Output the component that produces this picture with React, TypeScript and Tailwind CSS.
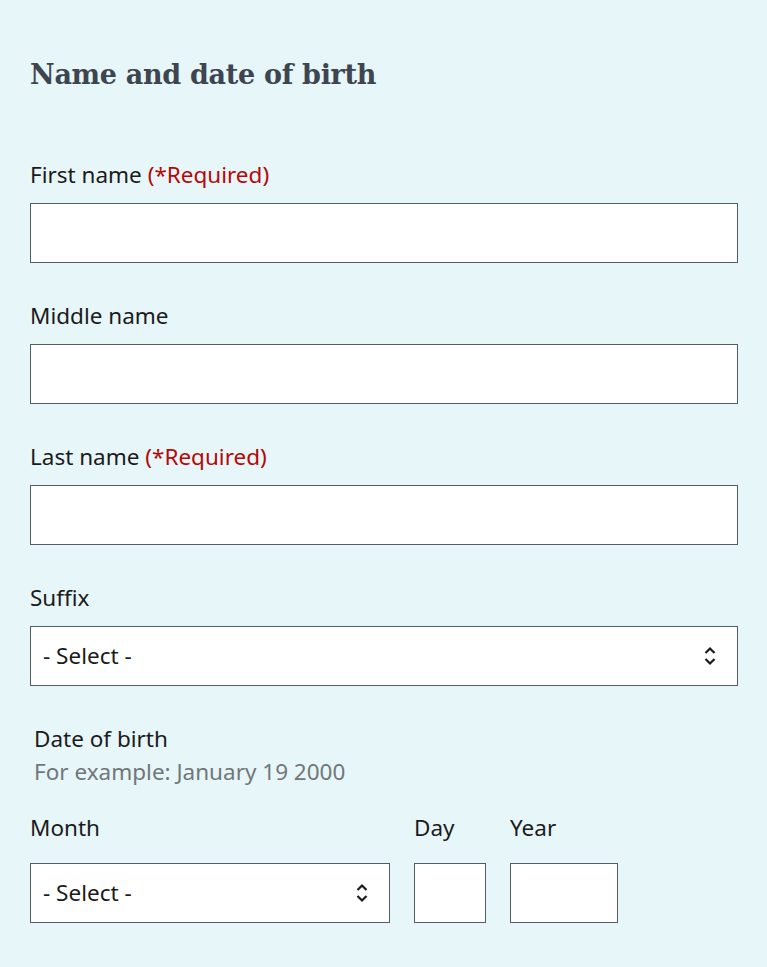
import React from "react";

const Chevrons = () => (
  <svg width="12" height="24" viewBox="0 0 12 24" fill="none" className="shrink-0">
    <path d="M1.5 9 L6 4.5 L10.5 9" stroke="#1b1b1b" strokeWidth="2.2" />
    <path d="M1.5 15 L6 19.5 L10.5 15" stroke="#1b1b1b" strokeWidth="2.2" />
  </svg>
);

const Label = ({ text, required }: { text: string; required?: boolean }) => (
  <div className="h-[28px] leading-[28px] text-[22.5px] text-[#1b1b1b]">
    {text}
    {required && <span className="text-[#b50909]"> (*Required)</span>}
  </div>
);

const TextInput = ({ className = "w-full" }: { className?: string }) => (
  <div className={`h-[60px] bg-white border border-[#565c65] ${className}`} />
);

const Select = ({ className = "w-full" }: { className?: string }) => (
  <div className={`h-[60px] bg-white border border-[#565c65] flex items-center justify-between pl-[12px] pr-[21px] ${className}`}>
    <span className="text-[22.5px] text-[#1b1b1b]">- Select -</span>
    <Chevrons />
  </div>
);

const Field = ({ label, required, gap = "gap-[14px]", children }: { label: string; required?: boolean; gap?: string; children: React.ReactNode }) => (
  <div className={`flex flex-col ${gap}`}>
    <Label text={label} required={required} />
    {children}
  </div>
);

export default function App() {
  return (
    <div className="min-h-[967px] bg-[#e7f6f8] pl-[30px] pr-[29px] pt-[56px] font-['Noto_Sans',sans-serif]">
      <h2 className="text-[27px] leading-[38px] font-bold text-[#3d4551] font-['DejaVu_Serif',serif] tracking-[-0.3px]">
        Name and date of birth
      </h2>
      <div className="flex flex-col gap-[39px] mt-[67px]">
        <Field label="First name" required>
          <TextInput />
        </Field>
        <Field label="Middle name">
          <TextInput />
        </Field>
        <Field label="Last name" required>
          <TextInput />
        </Field>
        <Field label="Suffix">
          <Select />
        </Field>
      </div>
      <div className="mt-[39px] pl-[4px]">
        <div className="h-[28px] leading-[28px] text-[22.5px] text-[#1b1b1b]">Date of birth</div>
        <div className="h-[28px] leading-[28px] mt-[5px] text-[22.5px] text-[#71767a]">
          For example: January 19 2000
        </div>
      </div>
      <div className="flex gap-[24px] mt-[28px]">
        <Field label="Month" gap="gap-[21px]">
          <Select className="w-[360px]" />
        </Field>
        <Field label="Day" gap="gap-[21px]">
          <TextInput className="w-[72px]" />
        </Field>
        <Field label="Year" gap="gap-[21px]">
          <TextInput className="w-[108px]" />
        </Field>
      </div>
    </div>
  );
}
